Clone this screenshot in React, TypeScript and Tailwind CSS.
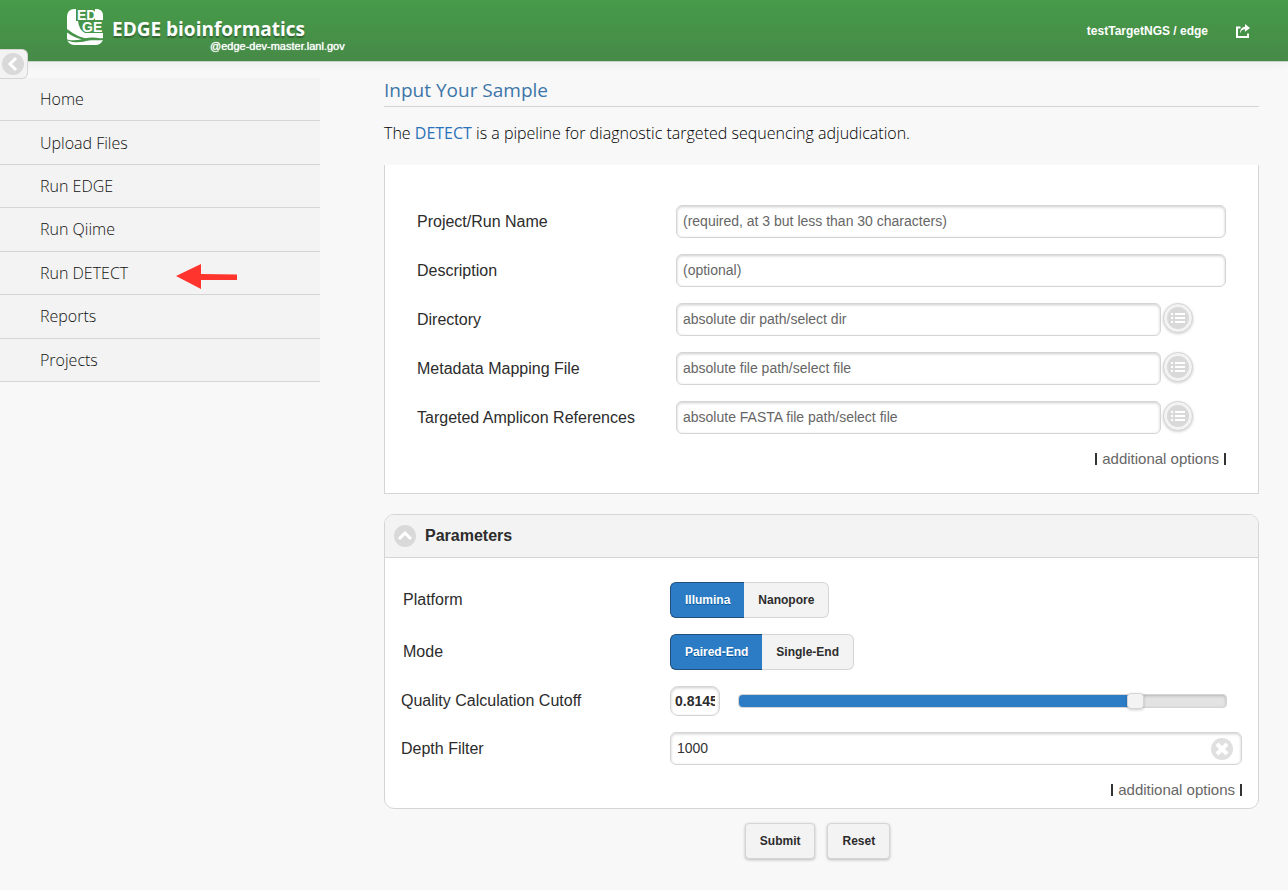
import { useState } from "react";

const navItems = ["Home", "Upload Files", "Run EDGE", "Run Qiime", "Run DETECT", "Reports", "Projects"];

const inputBox =
  "h-[33px] min-w-0 rounded-md border border-[#d5d5d5] bg-white px-[6px] pb-px text-sm text-[#333] shadow-[inset_0_1px_3px_rgba(0,0,0,0.2)] outline-none placeholder:text-[#666]";

function Logo() {
  return (
    <svg width="36" height="36" viewBox="0 0 36 36" overflow="visible" aria-hidden="true">
      <rect width="36" height="36" rx="7" fill="#fff" />
      <path d="M9 0H28V11H36V24H18Q12 21 11 12H9Z" fill="#46954a" />
      <path d="M28 0Q35 5 31 11H36V7Q36 0 29 0Z" fill="#fff" />
      <path d="M0 20C8 26 14 29 24 30.500C14 31 8 29 0 23.500Z" fill="#46954a" />
      <path d="M0 30.500C10 33 16 29 24 28.500S32 30 36 29V31C30 32 28 30.500 22 31.500S10 35 0 31.500Z" fill="#46954a" />
      <path d="M14 24Q24 27 36 24V28Q28 29 18 27Z" fill="#fff" />
      <g fill="#fff" fontSize="14" fontWeight="700" className="font-['Liberation_Sans',sans-serif]">
        <text x="10" y="11">ED</text>
        <text x="15" y="23">GE</text>
      </g>
    </svg>
  );
}

function ShareIcon() {
  return (
    <svg width="14" height="14" viewBox="0 0 14 14" aria-hidden="true">
      <path d="M4.500 3.500H1V13H12V9.500" fill="none" stroke="#fff" strokeWidth="2" />
      <path d="M4 9.500C4 5.500 6 3 9 2.800V0L14 4L9 7.800V5.200C6.500 5.200 5 6.500 4 9.500Z" fill="#fff" />
    </svg>
  );
}

function Disc({ shape }: { shape: "left" | "up" | "list" | "close" }) {
  return (
    <svg width="22" height="22" viewBox="0 0 22 22" aria-hidden="true">
      <circle cx="11" cy="11" r="11" fill={shape === "close" ? "#e0e0e0" : "#d9d9d9"} />
      {shape === "left" && <path d="M14 5L8 11L14 17" fill="none" stroke="#fff" strokeWidth="3" />}
      {shape === "up" && <path d="M5 14L11 8L17 14" fill="none" stroke="#fff" strokeWidth="3" />}
      {shape === "close" && <path d="M6 6L16 16M16 6L6 16" fill="none" stroke="#fff" strokeWidth="4" />}
      {shape === "list" && (
        <path d="M4 7H6M8 7H18M4 11H6M8 11H18M4 15H6M8 15H18" fill="none" stroke="#fff" strokeWidth="2" />
      )}
    </svg>
  );
}

function Field({ id, label, placeholder, browse }: { id: string; label: string; placeholder: string; browse?: boolean }) {
  return (
    <div className="flex items-center">
      <label htmlFor={id} className="w-[259px] shrink-0 text-base">{label}</label>
      <div className={browse ? "flex grow items-start gap-[2px] pr-[33px]" : "flex grow"}>
        <input id={id} type="text" placeholder={placeholder} className={`${inputBox} grow`} />
        {browse && (
          <button
            type="button"
            aria-label={`Select ${label}`}
            className="flex size-[30px] shrink-0 items-center justify-center rounded-full border border-[#d5d5d5] bg-[#f3f3f3] shadow-[0_1px_3px_rgba(0,0,0,0.2)]"
          >
            <Disc shape="list" />
          </button>
        )}
      </div>
    </div>
  );
}

function Options() {
  return (
    <div className="-mt-px flex items-center justify-end gap-[5px] text-[15px] leading-5 text-[#666]">
      <span className="h-3 w-[2px] bg-[#333]" />
      <a href="#options">additional options</a>
      <span className="h-3 w-[2px] bg-[#333]" />
    </div>
  );
}

function Toggle({ options, label }: { options: string[]; label: string }) {
  const [selected, setSelected] = useState(options[0]);
  return (
    <div role="group" aria-label={label} className="flex">
      {options.map((option) => (
        <button
          key={option}
          type="button"
          aria-pressed={option === selected}
          onClick={() => setSelected(option)}
          className={
            option === selected
              ? "h-9 border border-[#1f4f7c] bg-[#2c7cc5] px-[14px] text-xs font-bold text-white [text-shadow:0_1px_0_#059] first:rounded-l-md first:border-r-0 last:rounded-r-md last:border-l-0"
              : "h-9 border border-[#d5d5d5] bg-[#f3f3f3] px-[14px] text-xs font-bold text-[#2c2c2c] first:rounded-l-md first:border-r-0 last:rounded-r-md last:border-l-0"
          }
        >
          {option}
        </button>
      ))}
    </div>
  );
}

export default function App() {
  const [cutoff, setCutoff] = useState("0.8145");
  const [depth, setDepth] = useState("1000");
  return (
    <div className="min-h-screen bg-[#f8f8f8] font-['Liberation_Sans',sans-serif] text-[#2c2c2c]">
      <header className="relative flex h-[62px] items-center justify-between border-b border-[#c9d3c9] bg-linear-to-b from-[#469b49] to-[#468a47] pr-[38px] pl-[67px] text-white shadow-[0_2px_10px_rgba(0,0,0,0.05)]">
        <div className="flex items-start gap-[9px]">
          <Logo />
          <div className="flex flex-col pt-2">
            <h1 className="font-['Open_Sans',sans-serif] text-[19px] leading-6 font-bold [text-shadow:0_2px_1px_rgba(0,0,0,0.3)]">
              EDGE bioinformatics
            </h1>
            <span className="-mt-px pl-[98px] text-[11px] leading-3 [text-shadow:0_0_1px_#fff]">@edge-dev-master.lanl.gov</span>
          </div>
        </div>
        <div className="flex items-center gap-7 text-xs font-bold">
          <span>testTargetNGS / edge</span>
          <button type="button" aria-label="Share"><ShareIcon /></button>
        </div>
        <button
          type="button"
          aria-label="Collapse menu"
          className="absolute top-[49px] left-0 flex h-[30px] w-7 items-center justify-center rounded-r-md border border-l-0 border-[#d5d5d5] bg-[#f3f3f3] pr-[2px]"
        >
          <Disc shape="left" />
        </button>
      </header>

      <div className="flex items-start gap-16 pt-4 pr-[29px]">
        <nav className="grid min-h-[304px] w-80 shrink-0 auto-rows-fr bg-[#f3f3f3] font-['Open_Sans',sans-serif]">
          {navItems.map((item) => (
            <a
              key={item}
              href="#menu"
              className="relative flex items-center border-b border-[#d5d5d5] pl-10 text-base leading-6 font-light text-[#111]"
            >
              {item}
              {item === "Run DETECT" && (
                <svg className="absolute top-3 left-44" width="61" height="26" viewBox="0 0 61 26" aria-hidden="true">
                  <path d="M0 12L25 0V10L61 10.500V16H25V25Z" fill="#ff342c" />
                </svg>
              )}
            </a>
          ))}
        </nav>

        <main className="min-w-0 grow pb-7">
          <h2 className="border-b border-[#d5d5d5] pt-px pb-1 font-['Open_Sans',sans-serif] text-[19px] leading-[23px] font-medium text-[#3d76a8]">
            Input Your Sample
          </h2>
          <p className="pt-[14px] pb-5 font-['Open_Sans',sans-serif] text-base leading-6 font-light text-black">
            The <a href="#detect" className="font-normal text-[#2c72b8]">DETECT</a> is a pipeline for diagnostic targeted sequencing adjudication.
          </p>

          <section className="flex flex-col gap-4 border border-t-0 border-[#d5d5d5] bg-white px-8 pt-10 pb-6">
            <Field id="name" label="Project/Run Name" placeholder="(required, at 3 but less than 30 characters)" />
            <Field id="description" label="Description" placeholder="(optional)" />
            <Field id="directory" label="Directory" placeholder="absolute dir path/select dir" browse />
            <Field id="mapping" label="Metadata Mapping File" placeholder="absolute file path/select file" browse />
            <Field id="references" label="Targeted Amplicon References" placeholder="absolute FASTA file path/select file" browse />
            <Options />
          </section>

          <section className="mt-5 overflow-hidden rounded-[10px] border border-[#d5d5d5] bg-white">
            <h3 className="border-b border-[#d5d5d5] bg-[#f3f3f3]">
              <button type="button" aria-expanded="true" className="flex h-[42px] w-full items-center gap-[9px] px-[9px] text-base font-bold">
                <Disc shape="up" />
                Parameters
              </button>
            </h3>
            <div className="flex flex-col gap-4 px-4 pt-6 pb-2">
              <div className="flex items-center">
                <span className="w-[269px] pl-[2px]">Platform</span>
                <Toggle label="Platform" options={["Illumina", "Nanopore"]} />
              </div>
              <div className="flex items-center">
                <span className="w-[269px] pl-[2px]">Mode</span>
                <Toggle label="Mode" options={["Paired-End", "Single-End"]} />
              </div>
              <div className="flex items-center">
                <label htmlFor="cutoff" className="w-[269px]">Quality Calculation Cutoff</label>
                <input
                  id="cutoff"
                  type="text"
                  value={cutoff}
                  onChange={(e) => setCutoff(e.target.value)}
                  className="h-[30px] w-[50px] rounded-lg border border-[#d5d5d5] px-1 text-sm font-bold shadow-[inset_0_1px_3px_rgba(0,0,0,0.2)] outline-none"
                />
                <div className="relative mr-[15px] ml-[18px] flex h-[14px] grow items-center rounded border border-[#d5d5d5] bg-[#e3e3e3] shadow-[inset_0_1px_3px_rgba(0,0,0,0.2)]">
                  <div className="h-full rounded-l bg-[#2c7cc5]" style={{ width: `${Number(cutoff) * 100 || 0}%` }} />
                  <input
                    type="range"
                    aria-label="Quality Calculation Cutoff"
                    min="0"
                    max="1"
                    step="0.0001"
                    value={cutoff}
                    onChange={(e) => setCutoff(e.target.value)}
                    className="absolute -inset-x-2 h-4 appearance-none bg-transparent outline-none [&::-webkit-slider-thumb]:h-4 [&::-webkit-slider-thumb]:w-[17px] [&::-webkit-slider-thumb]:appearance-none [&::-webkit-slider-thumb]:rounded [&::-webkit-slider-thumb]:border [&::-webkit-slider-thumb]:border-[#d5d5d5] [&::-webkit-slider-thumb]:bg-[#f3f3f3] [&::-webkit-slider-thumb]:shadow-[0_1px_3px_rgba(0,0,0,0.2)]"
                  />
                </div>
              </div>
              <div className="flex items-center">
                <label htmlFor="depth" className="w-[269px]">Depth Filter</label>
                <div className="relative flex grow items-center">
                  <input id="depth" type="text" value={depth} onChange={(e) => setDepth(e.target.value)} className={`${inputBox} grow`} />
                  <button type="button" aria-label="Clear text" onClick={() => setDepth("")} className="absolute right-[9px]">
                    <Disc shape="close" />
                  </button>
                </div>
              </div>
              <Options />
            </div>
          </section>

          <div className="flex justify-center gap-3 pt-[14px] pr-2 text-xs font-bold">
            <button type="submit" className="h-9 rounded border border-[#d5d5d5] bg-[#f3f3f3] px-[14px] shadow-[0_1px_3px_rgba(0,0,0,0.25)]">Submit</button>
            <button type="reset" className="h-9 rounded border border-[#d5d5d5] bg-[#f3f3f3] px-[14px] shadow-[0_1px_3px_rgba(0,0,0,0.25)]">Reset</button>
          </div>
        </main>
      </div>
    </div>
  );
}
